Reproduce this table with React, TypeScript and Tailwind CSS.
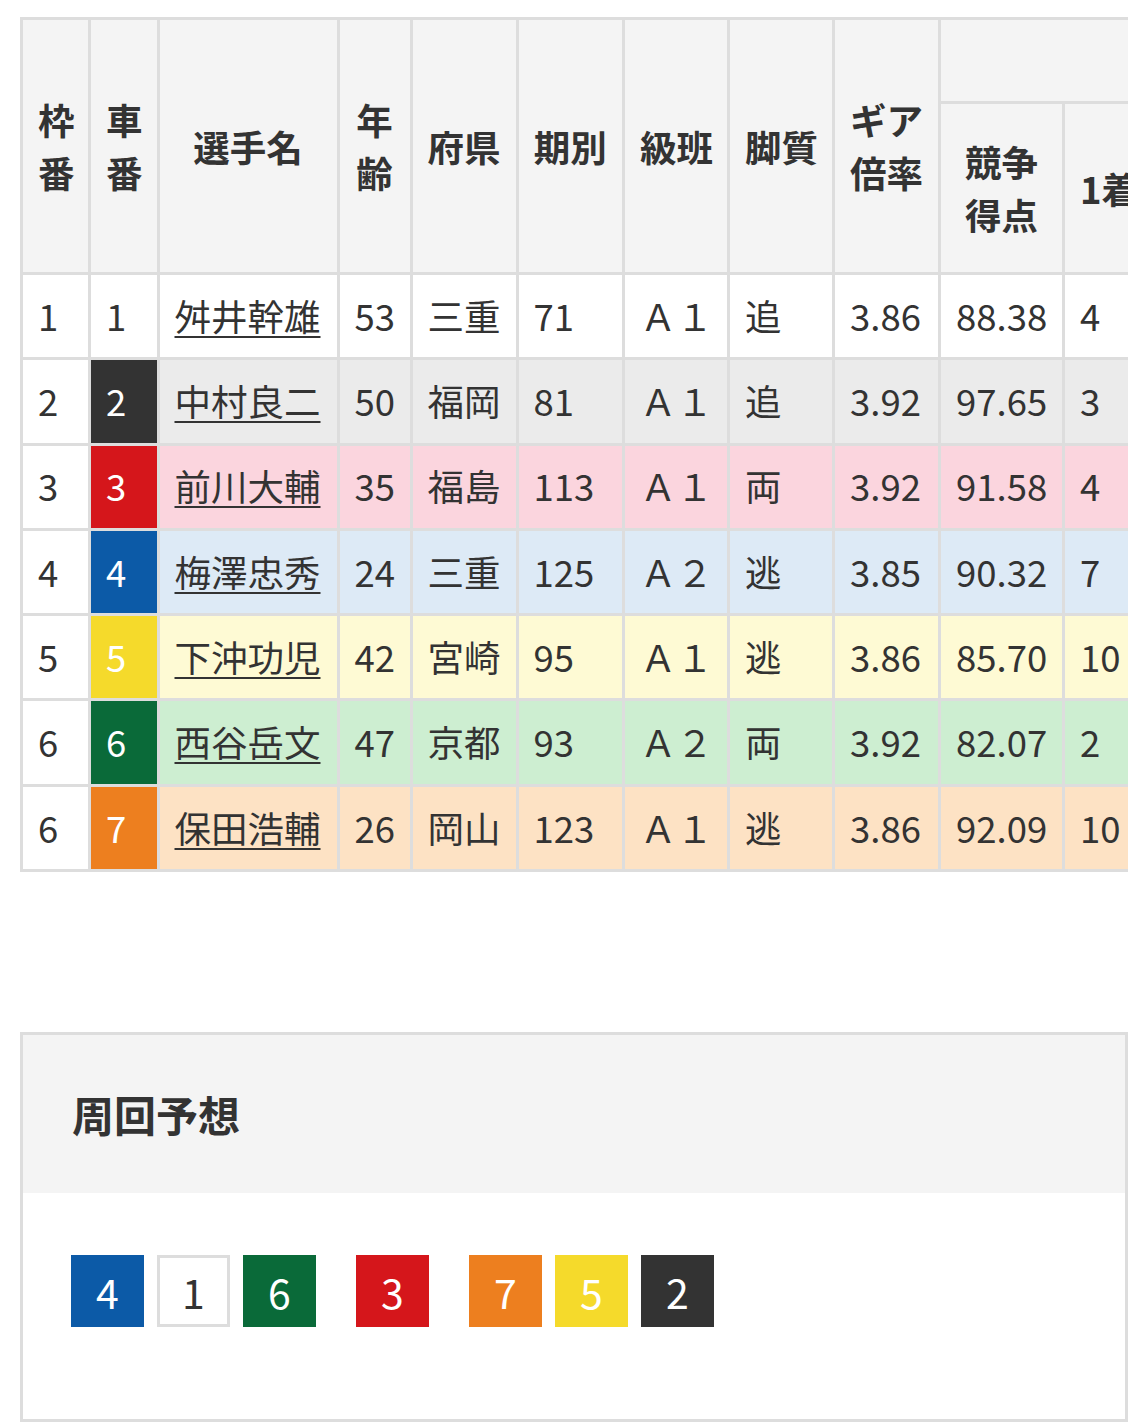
import React from "react";

type Row = {
  waku: number;
  sha: number;
  name: string;
  age: number;
  pref: string;
  ki: number;
  kyu: string;
  kyaku: string;
  gear: string;
  score: string;
  first: number;
  rowBg: string;
  numBg: string;
  numText: string;
};

const rows: Row[] = [
  { waku: 1, sha: 1, name: "舛井幹雄", age: 53, pref: "三重", ki: 71, kyu: "Ａ１", kyaku: "追", gear: "3.86", score: "88.38", first: 4, rowBg: "bg-white", numBg: "bg-white", numText: "text-[#333333]" },
  { waku: 2, sha: 2, name: "中村良二", age: 50, pref: "福岡", ki: 81, kyu: "Ａ１", kyaku: "追", gear: "3.92", score: "97.65", first: 3, rowBg: "bg-[#ebebeb]", numBg: "bg-[#333333]", numText: "text-white" },
  { waku: 3, sha: 3, name: "前川大輔", age: 35, pref: "福島", ki: 113, kyu: "Ａ１", kyaku: "両", gear: "3.92", score: "91.58", first: 4, rowBg: "bg-[#fbd5de]", numBg: "bg-[#d5161b]", numText: "text-white" },
  { waku: 4, sha: 4, name: "梅澤忠秀", age: 24, pref: "三重", ki: 125, kyu: "Ａ２", kyaku: "逃", gear: "3.85", score: "90.32", first: 7, rowBg: "bg-[#ddeaf6]", numBg: "bg-[#0c5aa7]", numText: "text-white" },
  { waku: 5, sha: 5, name: "下沖功児", age: 42, pref: "宮崎", ki: 95, kyu: "Ａ１", kyaku: "逃", gear: "3.86", score: "85.70", first: 10, rowBg: "bg-[#fefad4]", numBg: "bg-[#f5da2b]", numText: "text-white" },
  { waku: 6, sha: 6, name: "西谷岳文", age: 47, pref: "京都", ki: 93, kyu: "Ａ２", kyaku: "両", gear: "3.92", score: "82.07", first: 2, rowBg: "bg-[#cdeed1]", numBg: "bg-[#0a6a39]", numText: "text-white" },
  { waku: 6, sha: 7, name: "保田浩輔", age: 26, pref: "岡山", ki: 123, kyu: "Ａ１", kyaku: "逃", gear: "3.86", score: "92.09", first: 10, rowBg: "bg-[#fde2c4]", numBg: "bg-[#ed7f1f]", numText: "text-white" },
];

const badgeStyles: Record<number, string> = {
  1: "bg-white text-[#333333] border-[3px] border-[#dddddd]",
  2: "bg-[#333333] text-white",
  3: "bg-[#d5161b] text-white",
  4: "bg-[#0c5aa7] text-white",
  5: "bg-[#f5da2b] text-white",
  6: "bg-[#0a6a39] text-white",
  7: "bg-[#ed7f1f] text-white",
};

const groups = [[4, 1, 6], [3], [7, 5, 2]];

const th = "border-[3px] border-[#dddddd] bg-[#f4f4f4] font-bold text-center align-middle px-[15px] leading-[53px] whitespace-nowrap";
const td = "border-[3px] border-[#dddddd] px-[15px] text-left align-middle whitespace-nowrap h-[85.3px]";

export default function App() {
  return (
    <div className="min-h-[1426px] bg-white text-[#333333] font-['Noto_Sans_CJK_JP','Noto_Sans',sans-serif]">
      <div className="pt-[17px] pl-[20px]">
        <div className="w-[1108px] overflow-hidden">
          <table className="table-fixed border-collapse w-[1406px] text-[36.5px]">
            <colgroup>
              <col className="w-[68px]" />
              <col className="w-[68.5px]" />
              <col className="w-[180px]" />
              <col className="w-[73px]" />
              <col className="w-[106px]" />
              <col className="w-[106.5px]" />
              <col className="w-[105px]" />
              <col className="w-[105px]" />
              <col className="w-[106px]" />
              <col className="w-[124px]" />
              <col className="w-[91px]" />
              <col className="w-[91px]" />
              <col className="w-[91px]" />
              <col className="w-[91px]" />
            </colgroup>
            <thead>
              <tr className="h-[84px]">
                <th rowSpan={2} className={th}>枠<br />番</th>
                <th rowSpan={2} className={th}>車<br />番</th>
                <th rowSpan={2} className={th}>選手名</th>
                <th rowSpan={2} className={th}>年<br />齢</th>
                <th rowSpan={2} className={th}>府県</th>
                <th rowSpan={2} className={th}>期別</th>
                <th rowSpan={2} className={th}>級班</th>
                <th rowSpan={2} className={th}>脚質</th>
                <th rowSpan={2} className={th}>ギア<br />倍率</th>
                <th colSpan={5} className={th}></th>
              </tr>
              <tr className="h-[171px]">
                <th className={th}>競争<br />得点</th>
                <th className={th}>1着</th>
                <th className={th}>2着</th>
                <th className={th}>3着</th>
                <th className={th}>着外</th>
              </tr>
            </thead>
            <tbody>
              {rows.map((r, i) => (
                <tr key={i} className={r.rowBg}>
                  <td className={`${td} bg-white`}>{r.waku}</td>
                  <td className={`${td} ${r.numBg} ${r.numText}`}>{r.sha}</td>
                  <td className={td}>
                    <span className="underline decoration-[2px] underline-offset-[5px]">{r.name}</span>
                  </td>
                  <td className={td}>{r.age}</td>
                  <td className={td}>{r.pref}</td>
                  <td className={td}>{r.ki}</td>
                  <td className={`${td} text-center`}>{r.kyu}</td>
                  <td className={td}>{r.kyaku}</td>
                  <td className={`${td} text-center`}>{r.gear}</td>
                  <td className={td}>{r.score}</td>
                  <td className={td}>{r.first}</td>
                  <td className={td}>0</td>
                  <td className={td}>0</td>
                  <td className={td}>0</td>
                </tr>
              ))}
            </tbody>
          </table>
        </div>
      </div>

      <div className="mt-[160px] ml-[20px] w-[1108px] border-[3px] border-[#dddddd]">
        <div className="h-[158px] bg-[#f4f4f4] flex items-center pl-[49px]">
          <h2 className="text-[42px] font-bold leading-none">周回予想</h2>
        </div>
        <div className="pt-[62px] pb-[92px] pl-[48px] flex items-center gap-[40px]">
          {groups.map((g, gi) => (
            <div key={gi} className="flex gap-[13px]">
              {g.map((n) => (
                <div
                  key={n}
                  className={`w-[73px] h-[72px] flex items-center justify-center text-[41px] leading-none ${badgeStyles[n]}`}
                >
                  {n}
                </div>
              ))}
            </div>
          ))}
        </div>
      </div>
    </div>
  );
}
